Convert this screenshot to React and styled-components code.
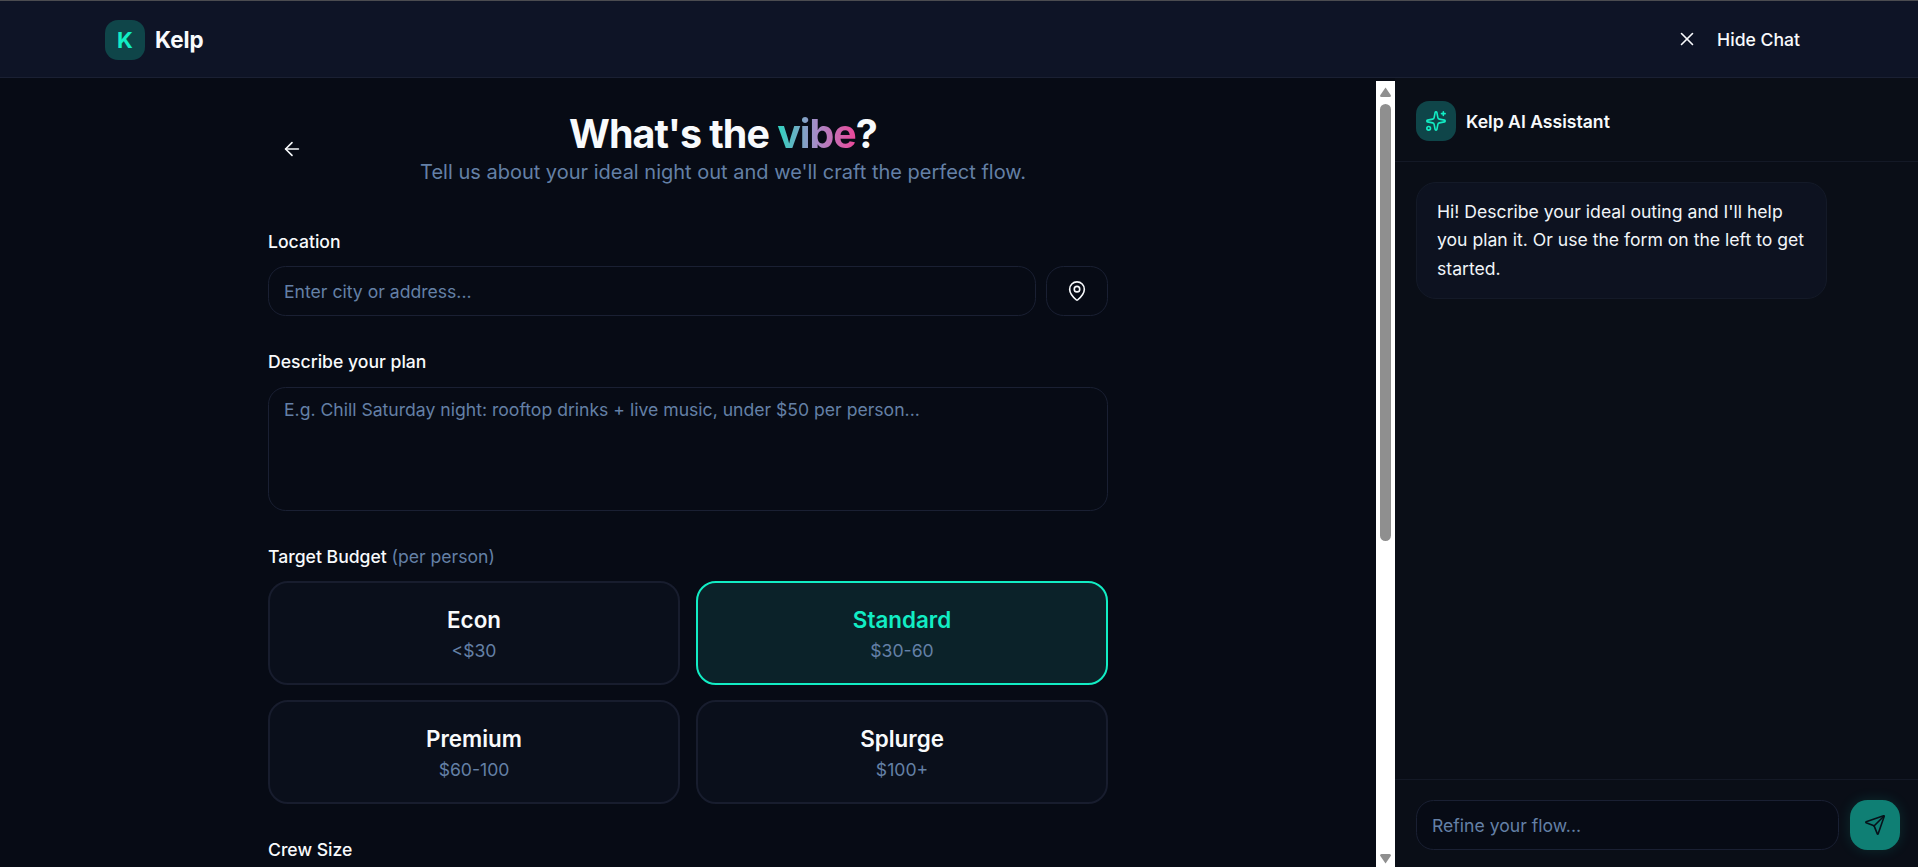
import React from "react";
import styled, { createGlobalStyle } from "styled-components";
import { ArrowLeft, MapPin, Send, Sparkles, X } from "lucide-react";

const MUTED = "#6480a6";
const ACCENT = "#12edc4";

const Global = createGlobalStyle`
  html, body { margin: 0; height: 100%; overflow: hidden; background: #070b15; }
  * { box-sizing: border-box; }
  body { font-family: Inter, "Liberation Sans", sans-serif; color: #f8fafc; }
`;

const Shell = styled.div`
  height: 867px;
  display: flex;
  flex-direction: column;
  border-top: 1px solid #4b4c50;
`;

const TopBar = styled.header`
  flex: 0 0 77px;
  display: flex;
  align-items: center;
  justify-content: space-between;
  padding: 2px 118px 0 105px;
  background: #0e1426;
  border-bottom: 1px solid #1a2033;
`;

const Brand = styled.div`
  display: flex;
  align-items: center;
  gap: 10px;
`;

const LogoMark = styled.div`
  width: 40px;
  height: 40px;
  border-radius: 13px;
  background: #0f4549;
  color: ${ACCENT};
  display: flex;
  align-items: center;
  justify-content: center;
  font-size: 22px;
  font-weight: 700;
`;

const BrandName = styled.span`
  padding-bottom: 2px;
  font-size: 22.4px;
  font-weight: 700;
`;

const HideChat = styled.button`
  display: flex;
  align-items: center;
  gap: 19px;
  padding: 0 0 2px;
  border: 0;
  background: none;
  color: #f8fafc;
  font: 500 17.6px Inter, sans-serif;
`;

const Body = styled.div`
  flex: 1;
  min-height: 0;
  display: flex;
`;

const Main = styled.main`
  flex: 0 0 1376px;
  overflow: hidden;
  background: #070b15;
`;

const ScrollRail = styled.div`
  flex: 0 0 19px;
  margin-top: 3px;
  background: #fff;
  display: flex;
  flex-direction: column;
  align-items: center;
  justify-content: space-between;
`;

const RailTop = styled.div`
  display: flex;
  flex-direction: column;
  align-items: center;
`;

const RailArrow = styled.svg`
  display: block;
  width: 11px;
  height: 10px;
  margin: ${(p) => p.$margin};
  fill: #8f8f8f;
`;

const RailThumb = styled.div`
  width: 11px;
  height: 437px;
  border-radius: 6px;
  background: #8f8f8f;
`;

const FormColumn = styled.div`
  width: 840px;
  margin: 0 auto;
  padding-top: 34px;
  display: flex;
  flex-direction: column;
  gap: 33px;
`;

const Intro = styled.div`
  display: flex;
  align-items: center;
  margin-bottom: 8px;
`;

const BackButton = styled.button`
  flex: 0 0 48px;
  height: 48px;
  margin: 0 22px 2px 0;
  padding: 0;
  border: 0;
  background: none;
  color: #f8fafc;
  display: flex;
  align-items: center;
  justify-content: center;
`;

const IntroText = styled.div`
  flex: 1;
  text-align: center;
`;

const Title = styled.h1`
  margin: 0 0 1px;
  font-size: 39.4px;
  line-height: 44px;
  font-weight: 700;
  letter-spacing: -0.025em;
`;

const Vibe = styled.span`
  background: linear-gradient(90deg, #2dd4bf, #a78bc8, #ec4899);
  -webkit-background-clip: text;
  background-clip: text;
  color: transparent;
`;

const Subtitle = styled.p`
  margin: 0;
  font-size: 20px;
  line-height: 30.8px;
  color: ${MUTED};
`;

const Field = styled.div`
  display: flex;
  flex-direction: column;
  gap: 11px;
`;

const Label = styled.label`
  font-size: 17.6px;
  line-height: 26.4px;
  font-weight: 500;
  color: #f8fafc;
`;

const Muted = styled.span`
  color: ${MUTED};
  font-weight: 400;
`;

const InputRow = styled.div`
  display: flex;
  gap: 10px;
`;

const TextInput = styled.input`
  flex: 1;
  min-width: 0;
  height: 50px;
  padding: 0 15px;
  border: 1px solid #1a2033;
  border-radius: 17.6px;
  background: #070b15;
  color: #f8fafc;
  font: 400 17.6px Inter, sans-serif;
  outline: none;
  &::placeholder { color: ${MUTED}; opacity: 1; }
`;

const PinButton = styled.button`
  flex: 0 0 62px;
  height: 50px;
  padding: 0;
  border: 1px solid #1a2033;
  border-radius: 17.6px;
  background: #070b15;
  color: #f8fafc;
  display: flex;
  align-items: center;
  justify-content: center;
`;

const PlanInput = styled.textarea`
  display: block;
  width: 100%;
  height: 124px;
  padding: 9px 15px;
  border: 1px solid #1a2033;
  border-radius: 17.6px;
  background: #070b15;
  color: #f8fafc;
  font: 400 17.6px/26.4px Inter, sans-serif;
  outline: none;
  resize: none;
  &::placeholder { color: ${MUTED}; opacity: 1; }
`;

const BudgetGrid = styled.div`
  display: grid;
  grid-template-columns: 1fr 1fr;
  gap: 15px 16px;
`;

const BudgetCard = styled.button`
  height: 104px;
  padding: 4px 0 0;
  border: 2px solid ${(p) => (p.$active ? ACCENT : "#181d2e")};
  border-radius: 20px;
  background: ${(p) => (p.$active ? "#0b2229" : "#0a0f1b")};
  display: flex;
  flex-direction: column;
  align-items: center;
  justify-content: center;
  gap: 2px;
  font-family: Inter, sans-serif;
`;

const BudgetName = styled.span`
  font-size: 22.4px;
  line-height: 30.8px;
  font-weight: 600;
  color: ${(p) => (p.$active ? ACCENT : "#f8fafc")};
`;

const BudgetRange = styled.span`
  font-size: 17.6px;
  line-height: 26.4px;
  color: ${MUTED};
`;

const ChatPanel = styled.aside`
  flex: 1;
  min-width: 0;
  display: flex;
  flex-direction: column;
  background: #0a0e17;
`;

const ChatHead = styled.div`
  flex: 0 0 84px;
  display: flex;
  align-items: center;
  gap: 10px;
  padding: 3px 21px 0;
  border-bottom: 1px solid #141926;
`;

const ChatIcon = styled.div`
  width: 40px;
  height: 40px;
  border-radius: 13px;
  background: #0f4549;
  color: ${ACCENT};
  display: flex;
  align-items: center;
  justify-content: center;
`;

const ChatTitle = styled.span`
  font-size: 17.6px;
  font-weight: 600;
`;

const Messages = styled.div`
  flex: 1;
  min-height: 0;
  padding: 20px 21px;
`;

const Bubble = styled.div`
  width: 411px;
  padding: 14.5px 20px;
  border: 1px solid #141a28;
  border-radius: 20px;
  background: #0d1220;
  color: #f1f5f9;
  font-size: 17.6px;
  line-height: 28.6px;
`;

const Composer = styled.div`
  flex: 0 0 88px;
  display: flex;
  gap: 11px;
  padding: 20px 18px 17px 21px;
  border-top: 1px solid #141926;
`;

const SendButton = styled.button`
  flex: 0 0 50px;
  height: 50px;
  padding: 0;
  border: 0;
  border-radius: 17.6px;
  background: #0f7f74;
  color: #07121a;
  display: flex;
  align-items: center;
  justify-content: center;
  box-shadow: 0 0 14px rgba(20, 224, 192, 0.14);
`;

const budgets = [
  { name: "Econ", range: "<$30" },
  { name: "Standard", range: "$30-60", active: true },
  { name: "Premium", range: "$60-100" },
  { name: "Splurge", range: "$100+" },
];

export default function App() {
  return (
    <>
      <Global />
      <Shell>
        <TopBar>
          <Brand>
            <LogoMark>K</LogoMark>
            <BrandName>Kelp</BrandName>
          </Brand>
          <HideChat>
            <X size={22} strokeWidth={1.75} />
            Hide Chat
          </HideChat>
        </TopBar>
        <Body>
          <Main>
            <FormColumn>
              <Intro>
                <BackButton aria-label="Back">
                  <ArrowLeft size={22} strokeWidth={1.75} />
                </BackButton>
                <IntroText>
                  <Title>
                    What's the <Vibe>vibe</Vibe>?
                  </Title>
                  <Subtitle>Tell us about your ideal night out and we'll craft the perfect flow.</Subtitle>
                </IntroText>
              </Intro>
              <Field>
                <Label>Location</Label>
                <InputRow>
                  <TextInput placeholder="Enter city or address..." />
                  <PinButton aria-label="Use my location">
                    <MapPin size={22} strokeWidth={1.75} />
                  </PinButton>
                </InputRow>
              </Field>
              <Field>
                <Label>Describe your plan</Label>
                <PlanInput placeholder="E.g. Chill Saturday night: rooftop drinks + live music, under $50 per person..." />
              </Field>
              <Field>
                <Label>
                  Target Budget <Muted>(per person)</Muted>
                </Label>
                <BudgetGrid>
                  {budgets.map((b) => (
                    <BudgetCard key={b.name} $active={b.active}>
                      <BudgetName $active={b.active}>{b.name}</BudgetName>
                      <BudgetRange>{b.range}</BudgetRange>
                    </BudgetCard>
                  ))}
                </BudgetGrid>
              </Field>
              <Field>
                <Label>Crew Size</Label>
              </Field>
            </FormColumn>
          </Main>
          <ScrollRail aria-hidden="true">
            <RailTop>
              <RailArrow $margin="6px 0 7px" viewBox="0 0 11 10">
                <path d="M5.5 0.5 L11 8.5 Q11 10 9.5 10 L1.5 10 Q0 10 0 8.5 Z" />
              </RailArrow>
              <RailThumb />
            </RailTop>
            <RailArrow $margin="0 0 3px" viewBox="0 0 11 10">
              <path d="M5.5 9.5 L11 1.5 Q11 0 9.5 0 L1.5 0 Q0 0 0 1.5 Z" />
            </RailArrow>
          </ScrollRail>
          <ChatPanel>
            <ChatHead>
              <ChatIcon>
                <Sparkles size={22} strokeWidth={1.75} />
              </ChatIcon>
              <ChatTitle>Kelp AI Assistant</ChatTitle>
            </ChatHead>
            <Messages>
              <Bubble>Hi! Describe your ideal outing and I'll help you plan it. Or use the form on the left to get started.</Bubble>
            </Messages>
            <Composer>
              <TextInput placeholder="Refine your flow..." />
              <SendButton aria-label="Send">
                <Send size={22} strokeWidth={1.75} />
              </SendButton>
            </Composer>
          </ChatPanel>
        </Body>
      </Shell>
    </>
  );
}
